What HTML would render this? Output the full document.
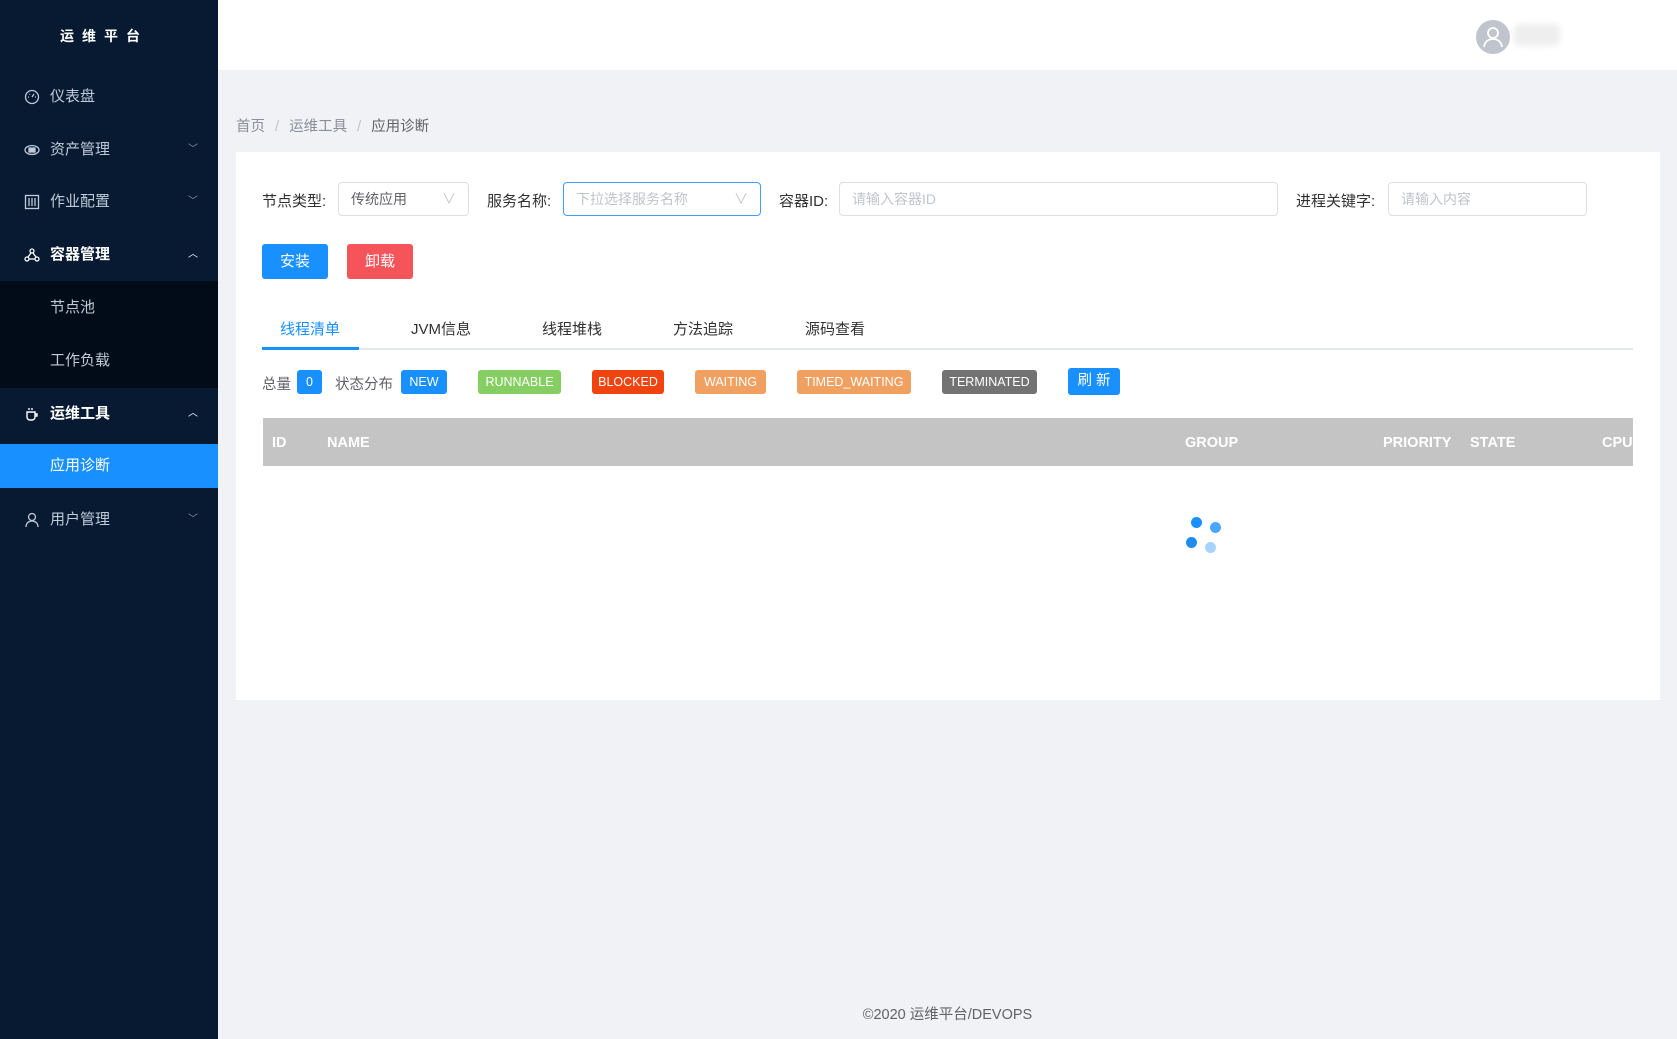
<!DOCTYPE html>
<html><head><meta charset="utf-8"><style>
*{margin:0;padding:0;box-sizing:border-box}
body{width:1677px;height:1039px;position:relative;background:#f0f2f5;font-family:"Liberation Sans","Noto Sans CJK SC",sans-serif;font-size:15px;color:#606266;overflow:hidden}
.a{position:absolute;white-space:nowrap}
#side{position:absolute;left:0;top:0;width:218px;height:1039px;background:#071a31}
.mi{position:absolute;left:0;width:218px;height:53px;line-height:53px;color:#bfcbd9;font-size:15px}
.mi .t{position:absolute;left:50px}
.mi .ic{position:absolute;left:24px;top:19px;width:16px;height:16px}
.mi .ar{position:absolute;left:188px;top:0;font-size:10px;color:#8a95a3}
.tag{position:absolute;top:370px;height:24px;line-height:24px;border-radius:3px;color:#fff;font-size:12.5px;text-align:center}
.inp{position:absolute;top:182px;height:34px;border:1px solid #dcdfe6;border-radius:4px;background:#fff;line-height:32px;padding-left:12px;font-size:14px;color:#c0c4cc}
.lbl{position:absolute;top:190px;font-size:15px;color:#303133}
.th{position:absolute;top:435px;color:#fff;font-weight:bold;font-size:14.5px}
</style></head><body>
<div id="side">
 <div class="a" style="left:0;width:208px;text-align:center;top:26px;color:#fff;font-weight:bold;font-size:14px;letter-spacing:8px">运维平台</div>
 <div class="mi" style="top:70px"><svg class="ic" viewBox="0 0 16 16" fill="none" stroke="#bfcbd9" stroke-width="1.3"><circle cx="8" cy="8" r="6.5"/><path d="M8 8l2-3M4 8h1M11 8h1M5.5 5l.5.5"/></svg><span class="t">仪表盘</span></div>
 <div class="mi" style="top:123px"><svg class="ic" viewBox="0 0 16 16" fill="none" stroke="#bfcbd9" stroke-width="1.3"><ellipse cx="8" cy="8" rx="7" ry="4.5"/><rect x="5" y="6" width="6" height="4" fill="#bfcbd9"/></svg><span class="t">资产管理</span><span class="ar">﹀</span></div>
 <div class="mi" style="top:175px"><svg class="ic" viewBox="0 0 16 16" fill="none" stroke="#bfcbd9" stroke-width="1.3"><rect x="1.5" y="1.5" width="13" height="13"/><path d="M5 4v8M8 4v8M11 4v8"/></svg><span class="t">作业配置</span><span class="ar">﹀</span></div>
 <div class="mi" style="top:228px;color:#fff"><svg class="ic" viewBox="0 0 16 16" fill="none" stroke="#fff" stroke-width="1.3"><circle cx="8" cy="4" r="2"/><circle cx="3" cy="12" r="2"/><circle cx="13" cy="12" r="2"/><path d="M7 6l-3 4M9 6l3 4M5 12h6"/></svg><span class="t" style="font-weight:bold">容器管理</span><span class="ar" style="color:#fff">︿</span></div>
 <div style="position:absolute;top:281px;left:0;width:218px;height:107px;background:#020c18"></div>
 <div class="mi" style="top:281px"><span class="t">节点池</span></div>
 <div class="mi" style="top:334px"><span class="t">工作负载</span></div>
 <div class="mi" style="top:387px;color:#fff"><svg class="ic" viewBox="0 0 16 16" fill="none" stroke="#fff" stroke-width="1.4"><path d="M3 6h8v5a3 3 0 0 1-3 3H6a3 3 0 0 1-3-3zM11 8h2v2h-2M5 2v2M8 2v2"/></svg><span class="t" style="font-weight:bold">运维工具</span><span class="ar" style="color:#fff">︿</span></div>
 <div class="mi" style="top:444px;height:44px;line-height:44px;background:#1890ff;color:#fff"><span class="t">应用诊断</span></div>
 <div class="mi" style="top:493px"><svg class="ic" viewBox="0 0 16 16" fill="none" stroke="#bfcbd9" stroke-width="1.3"><circle cx="8" cy="5" r="3.5"/><path d="M2 15c0-4 3-6 6-6s6 2 6 6"/></svg><span class="t">用户管理</span><span class="ar">﹀</span></div>
</div>
<div style="position:absolute;left:218px;top:0;width:1459px;height:70px;background:#fff"></div>
<div style="position:absolute;left:1476px;top:20px;width:34px;height:34px;border-radius:50%;background:#c0c4cc"><svg viewBox="0 0 34 34" width="34" height="34" fill="none" stroke="#fff" stroke-width="1.8"><circle cx="17" cy="13" r="5"/><path d="M8 27c1-6 5-8 9-8s8 2 9 8"/></svg></div>
<div style="position:absolute;left:1514px;top:24px;width:46px;height:22px;background:#eee;border-radius:6px;filter:blur(3px)"></div>
<div class="a" style="left:236px;top:115px;font-size:14.5px;color:#8a8f99">首页 <span style="margin:0 6px;color:#c0c4cc">/</span> 运维工具 <span style="margin:0 6px;color:#c0c4cc">/</span> <span style="color:#606266">应用诊断</span></div>
<div style="position:absolute;left:236px;top:152px;width:1424px;height:548px;background:#fff"></div>
<div class="lbl" style="left:262px">节点类型:</div>
<div class="inp" style="left:338px;width:131px;color:#606266">传统应用<span style="position:absolute;right:12px;color:#c0c4cc">∨</span></div>
<div class="lbl" style="left:487px">服务名称:</div>
<div class="inp" style="left:563px;width:198px;border-color:#409eff">下拉选择服务名称<span style="position:absolute;right:12px">∨</span></div>
<div class="lbl" style="left:779px">容器ID:</div>
<div class="inp" style="left:839px;width:439px">请输入容器ID</div>
<div class="lbl" style="left:1296px">进程关键字:</div>
<div class="inp" style="left:1388px;width:199px">请输入内容</div>
<div class="a" style="left:262px;top:244px;width:66px;height:35px;line-height:35px;text-align:center;background:#1890ff;color:#fff;border-radius:3px">安装</div>
<div class="a" style="left:347px;top:244px;width:66px;height:35px;line-height:35px;text-align:center;background:#f5555a;color:#fff;border-radius:3px">卸载</div>
<div style="position:absolute;left:262px;top:348px;width:1371px;height:2px;background:#e4e7ed"></div>
<div style="position:absolute;left:262px;top:347px;width:97px;height:3px;background:#1890ff"></div>
<div class="a" style="left:280px;top:318px;color:#1890ff">线程清单</div>
<div class="a" style="left:411px;top:318px;color:#303133">JVM信息</div>
<div class="a" style="left:542px;top:318px;color:#303133">线程堆栈</div>
<div class="a" style="left:673px;top:318px;color:#303133">方法追踪</div>
<div class="a" style="left:805px;top:318px;color:#303133">源码查看</div>
<div class="a" style="left:262px;top:373px;font-size:14.5px">总量</div>
<div class="tag" style="left:297px;width:25px;background:#1890ff">0</div>
<div class="a" style="left:335px;top:373px;font-size:14.5px">状态分布</div>
<div class="tag" style="left:401px;width:46px;background:#1890ff">NEW</div>
<div class="tag" style="left:478px;width:83px;background:#85ce61">RUNNABLE</div>
<div class="tag" style="left:592px;width:72px;background:#f0430f">BLOCKED</div>
<div class="tag" style="left:695px;width:71px;background:#f0a060">WAITING</div>
<div class="tag" style="left:797px;width:114px;background:#f0a060">TIMED_WAITING</div>
<div class="tag" style="left:942px;width:95px;background:#737373">TERMINATED</div>
<div class="tag" style="left:1068px;width:52px;top:368px;height:27px;line-height:27px;background:#1890ff;font-size:14.5px">刷 新</div>
<div style="position:absolute;left:263px;top:418px;width:1370px;height:48px;background:#c4c4c4"></div>
<div class="th" style="left:272px">ID</div>
<div class="th" style="left:327px">NAME</div>
<div class="th" style="left:1185px">GROUP</div>
<div class="th" style="left:1383px">PRIORITY</div>
<div class="th" style="left:1470px">STATE</div>
<div class="th" style="left:1602px">CPU</div>
<div style="position:absolute;left:1191px;top:517px;width:11px;height:11px;border-radius:50%;background:#1890ff"></div>
<div style="position:absolute;left:1210px;top:522px;width:11px;height:11px;border-radius:50%;background:#4aa6ff"></div>
<div style="position:absolute;left:1186px;top:537px;width:11px;height:11px;border-radius:50%;background:#1f8cf0"></div>
<div style="position:absolute;left:1205px;top:542px;width:11px;height:11px;border-radius:50%;background:#a8d3ff"></div>
<div class="a" style="left:0;width:1677px;padding-left:218px;text-align:center;top:1003px;font-size:14.5px;color:#606266">©2020 运维平台/DEVOPS</div>
</body></html>
